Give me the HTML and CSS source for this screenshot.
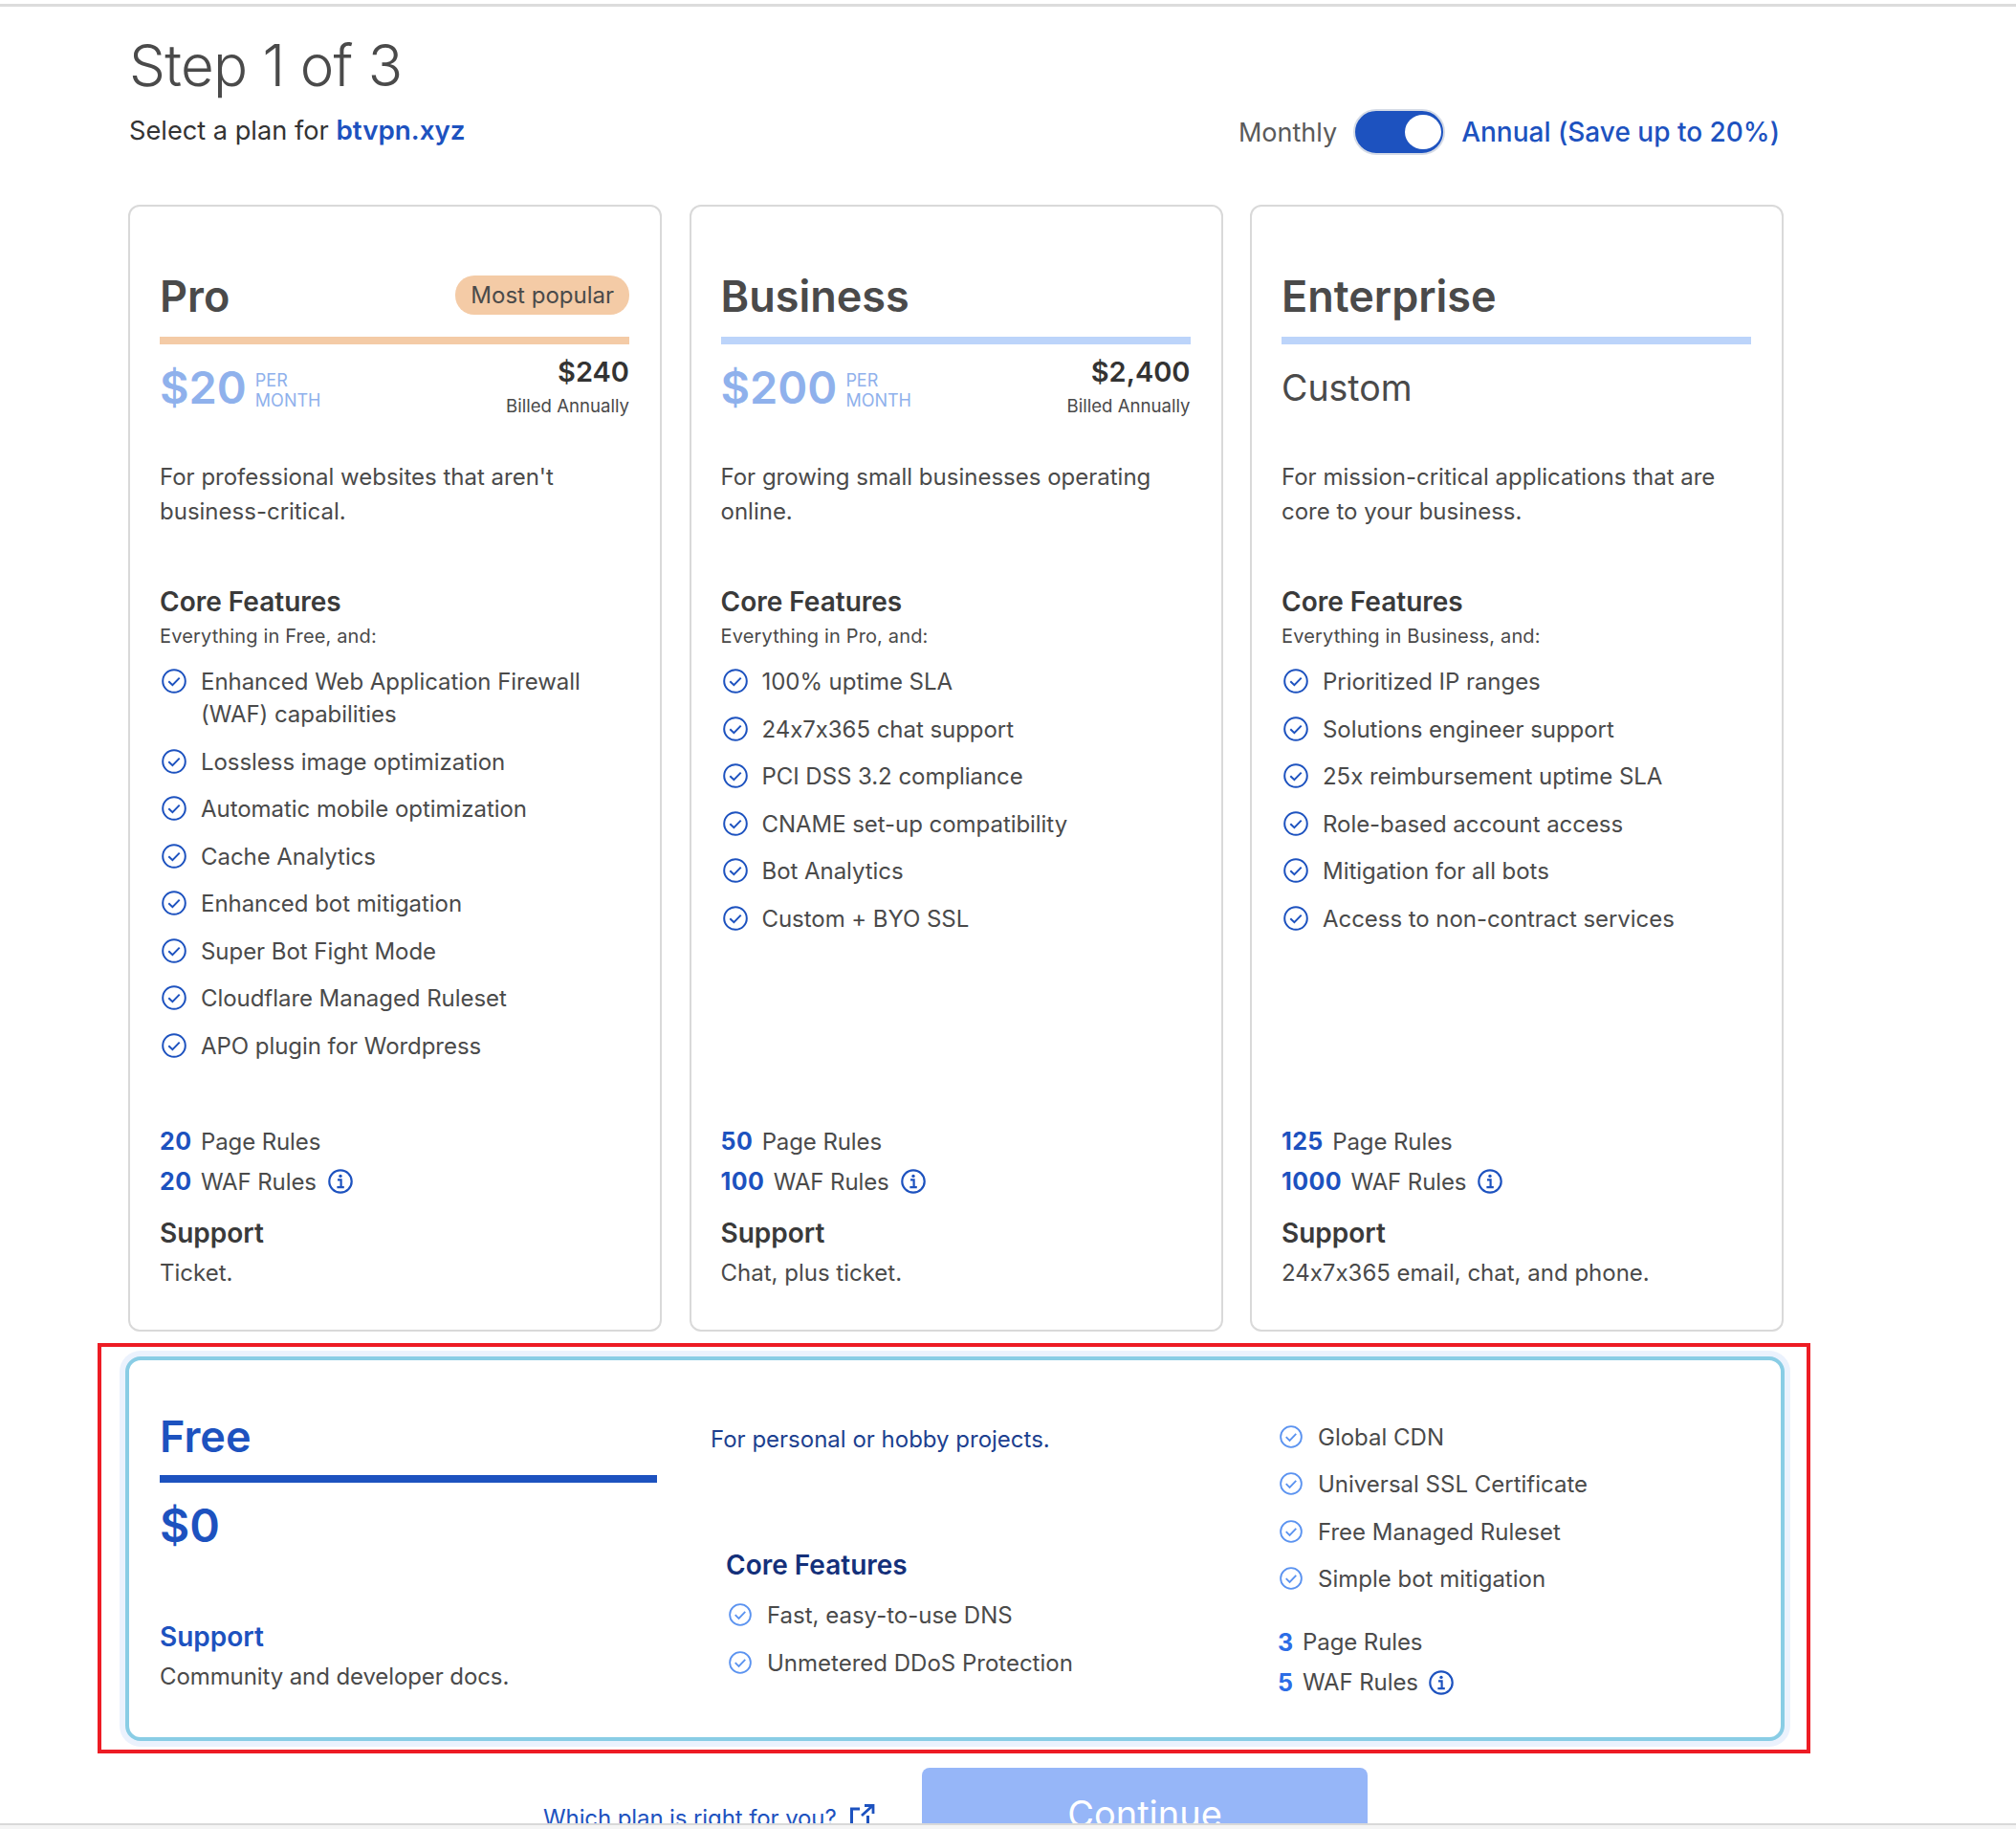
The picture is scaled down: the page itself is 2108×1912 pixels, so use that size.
FILE: index.html
```html
<!DOCTYPE html>
<html lang="en">
<head>
<meta charset="utf-8">
<title>Select a plan</title>
<link rel="stylesheet" href="styles.css">
</head>
<body>
<svg class="defs" width="0" height="0" aria-hidden="true">
  <symbol id="check" viewBox="0 0 26 26"><circle cx="13" cy="13" r="11.8" fill="none" stroke="currentColor" stroke-width="2"/><path d="M7.3 13.2l4.1 4 7.3-7.6" fill="none" stroke="currentColor" stroke-width="2"/></symbol>
  <symbol id="info" viewBox="0 0 26 26"><circle cx="13" cy="13" r="11.7" fill="none" stroke="currentColor" stroke-width="2.2"/><circle cx="13" cy="7.4" r="1.7" fill="currentColor"/><path d="M10 11.4h3.6v7.6M9.4 19.200h7.400" fill="none" stroke="currentColor" stroke-width="2.200"/></symbol>
  <symbol id="ext" viewBox="0 0 26 32"><path d="M10 5H1.500V32M18.500 12V32" fill="none" stroke="currentColor" stroke-width="3"/><path d="M12 12L23.500 1.500M15 1.500H24V10" fill="none" stroke="currentColor" stroke-width="2.800"/></symbol>
</svg>
<div class="page">
  <div class="topline"></div>
  <main class="main">
    <header class="header">
      <div>
        <h1 class="step">Step 1 of 3</h1>
        <p class="sub">Select a plan for <a class="domain">btvpn.xyz</a></p>
      </div>
      <div class="billing">
        <span class="billing-off">Monthly</span>
        <span class="switch"><span class="knob"></span></span>
        <span class="billing-on">Annual (Save up to 20%)</span>
      </div>
    </header>

    <section class="plans">
      <article class="card">
        <div class="card-head head-orange"><h2 class="plan-name">Pro</h2><span class="badge">Most popular</span></div>
        <div class="price-row">
          <div class="price"><span class="amount">$20</span><span class="per">PER<br>MONTH</span></div>
          <div class="billed"><strong>$240</strong><span>Billed Annually</span></div>
        </div>
        <p class="desc">For professional websites that aren't<br>business-critical.</p>
        <h3 class="feat-title">Core Features</h3>
        <p class="feat-sub">Everything in Free, and:</p>
        <ul class="feats">
          <li><svg class="ico"><use href="#check"/></svg><span>Enhanced Web Application Firewall<br>(WAF) capabilities</span></li>
          <li><svg class="ico"><use href="#check"/></svg><span>Lossless image optimization</span></li>
          <li><svg class="ico"><use href="#check"/></svg><span>Automatic mobile optimization</span></li>
          <li><svg class="ico"><use href="#check"/></svg><span>Cache Analytics</span></li>
          <li><svg class="ico"><use href="#check"/></svg><span>Enhanced bot mitigation</span></li>
          <li><svg class="ico"><use href="#check"/></svg><span>Super Bot Fight Mode</span></li>
          <li><svg class="ico"><use href="#check"/></svg><span>Cloudflare Managed Ruleset</span></li>
          <li><svg class="ico"><use href="#check"/></svg><span>APO plugin for Wordpress</span></li>
        </ul>
        <div class="rules">
          <div class="rule"><b>20</b><span>Page Rules</span></div>
          <div class="rule"><b>20</b><span>WAF Rules</span><svg class="ico-info"><use href="#info"/></svg></div>
        </div>
        <h3 class="support-title">Support</h3>
        <p class="support-text">Ticket.</p>
      </article>

      <article class="card">
        <div class="card-head head-blue"><h2 class="plan-name">Business</h2></div>
        <div class="price-row">
          <div class="price"><span class="amount">$200</span><span class="per">PER<br>MONTH</span></div>
          <div class="billed"><strong>$2,400</strong><span>Billed Annually</span></div>
        </div>
        <p class="desc">For growing small businesses operating<br>online.</p>
        <h3 class="feat-title">Core Features</h3>
        <p class="feat-sub">Everything in Pro, and:</p>
        <ul class="feats">
          <li><svg class="ico"><use href="#check"/></svg><span>100% uptime SLA</span></li>
          <li><svg class="ico"><use href="#check"/></svg><span>24x7x365 chat support</span></li>
          <li><svg class="ico"><use href="#check"/></svg><span>PCI DSS 3.2 compliance</span></li>
          <li><svg class="ico"><use href="#check"/></svg><span>CNAME set-up compatibility</span></li>
          <li><svg class="ico"><use href="#check"/></svg><span>Bot Analytics</span></li>
          <li><svg class="ico"><use href="#check"/></svg><span>Custom + BYO SSL</span></li>
        </ul>
        <div class="rules">
          <div class="rule"><b>50</b><span>Page Rules</span></div>
          <div class="rule"><b>100</b><span>WAF Rules</span><svg class="ico-info"><use href="#info"/></svg></div>
        </div>
        <h3 class="support-title">Support</h3>
        <p class="support-text">Chat, plus ticket.</p>
      </article>

      <article class="card">
        <div class="card-head head-blue"><h2 class="plan-name">Enterprise</h2></div>
        <div class="price-row"><div class="custom">Custom</div></div>
        <p class="desc">For mission-critical applications that are<br>core to your business.</p>
        <h3 class="feat-title">Core Features</h3>
        <p class="feat-sub">Everything in Business, and:</p>
        <ul class="feats">
          <li><svg class="ico"><use href="#check"/></svg><span>Prioritized IP ranges</span></li>
          <li><svg class="ico"><use href="#check"/></svg><span>Solutions engineer support</span></li>
          <li><svg class="ico"><use href="#check"/></svg><span>25x reimbursement uptime SLA</span></li>
          <li><svg class="ico"><use href="#check"/></svg><span>Role-based account access</span></li>
          <li><svg class="ico"><use href="#check"/></svg><span>Mitigation for all bots</span></li>
          <li><svg class="ico"><use href="#check"/></svg><span>Access to non-contract services</span></li>
        </ul>
        <div class="rules">
          <div class="rule"><b>125</b><span>Page Rules</span></div>
          <div class="rule"><b>1000</b><span>WAF Rules</span><svg class="ico-info"><use href="#info"/></svg></div>
        </div>
        <h3 class="support-title">Support</h3>
        <p class="support-text">24x7x365 email, chat, and phone.</p>
      </article>
    </section>

    <section class="highlight">
      <article class="free">
        <div class="free-a">
          <h2 class="free-name">Free</h2>
          <div class="free-price">$0</div>
          <h3 class="support-title free-support">Support</h3>
          <p class="support-text">Community and developer docs.</p>
        </div>
        <div class="free-b">
          <p class="free-desc">For personal or hobby projects.</p>
          <div class="free-core">
            <h3 class="feat-title navy">Core Features</h3>
            <ul class="feats light">
              <li><svg class="ico"><use href="#check"/></svg><span>Fast, easy-to-use DNS</span></li>
              <li><svg class="ico"><use href="#check"/></svg><span>Unmetered DDoS Protection</span></li>
            </ul>
          </div>
        </div>
        <div class="free-c">
          <ul class="feats light">
            <li><svg class="ico"><use href="#check"/></svg><span>Global CDN</span></li>
            <li><svg class="ico"><use href="#check"/></svg><span>Universal SSL Certificate</span></li>
            <li><svg class="ico"><use href="#check"/></svg><span>Free Managed Ruleset</span></li>
            <li><svg class="ico"><use href="#check"/></svg><span>Simple bot mitigation</span></li>
          </ul>
          <div class="rules free-rules">
            <div class="rule"><b>3</b><span>Page Rules</span></div>
            <div class="rule"><b>5</b><span>WAF Rules</span><svg class="ico-info"><use href="#info"/></svg></div>
          </div>
        </div>
      </article>
    </section>

    <div class="actions">
      <a class="help">Which plan is right for you?<svg class="ico-ext"><use href="#ext"/></svg></a>
      <button class="continue" type="button">Continue</button>
    </div>
  </main>
</div>
<div class="statusbar"></div>
</body>
</html>
```
FILE: styles.css
```css
* { box-sizing: border-box; }
html, body { margin: 0; padding: 0; background: #fff; }
body { font-family: Inter, "Liberation Sans", sans-serif; font-feature-settings: "calt" 0; color: #4a4a4a; overflow: hidden; height: 1912px; }
h1, h2, h3, p, ul { margin: 0; padding: 0; }
ul { list-style: none; }
.defs { position: absolute; }

.page { height: 1906px; overflow: hidden; padding-top: 4px; }
.topline { height: 3px; background: #dcdcdc; }
.main { width: 1730px; margin-left: 134px; }

.header { display: flex; justify-content: space-between; align-items: flex-start; height: 207px; padding-top: 26px; padding-right: 3px; }
.step { font-size: 60px; font-weight: 300; line-height: 70px; letter-spacing: -0.7px; color: #4a4a4a; margin-left: 1px; }
.sub { font-size: 27.200px; line-height: 36px; margin-top: 15px; color: #333; margin-left: 1px; }
.domain { color: #1d52bf; font-size: 27.800px; font-weight: 600; }
.billing { display: flex; align-items: center; margin-top: 81px; font-size: 28px; }
.billing-off { font-size: 27px; color: #5a5a5a; }
.switch { width: 96px; height: 48px; margin: 0 17px 0 17px; padding: 4px 2px 4px 0; display: flex; justify-content: flex-end; background: #1d52bf; border: 2px solid #d5dbe6; border-radius: 24px; }
.knob { width: 38px; height: 36px; background: #fff; border-radius: 50%; }
.billing-on { color: #1d52bf; font-weight: 500; }

.plans { display: grid; grid-template-columns: 558px 558px 558px; column-gap: 28.5px; height: 1178px; }
.card { display: flex; flex-direction: column; padding: 64px 32px 41px 31px; border: 2px solid #d9d9d9; border-radius: 12px; background: #fff; }
.card-head { display: flex; justify-content: space-between; align-items: center; height: 80px; padding-bottom: 12px; border-bottom: 8px solid; }
.head-orange { border-color: #f4cba6; }
.head-blue { border-color: #bcd4fa; }
.plan-name { font-size: 45px; font-weight: 600; line-height: 56px; color: #4a4a4a; }
.badge { height: 41px; margin-top: -3px; padding: 0 16px; display: flex; align-items: center; border-radius: 20px; background: #f4cba6; font-size: 24px; color: #4a4a4a; }

.price-row { display: flex; justify-content: space-between; align-items: flex-start; height: 121px; padding-top: 15px; }
.price { display: flex; align-items: center; color: #8fb1ec; height: 60px; }
.amount { font-size: 47px; font-weight: 600; line-height: 60px; }
.per { font-size: 18px; line-height: 21px; margin: 6px 0 0 9px; }
.billed { display: flex; flex-direction: column; align-items: flex-end; }
.billed strong { font-size: 29px; line-height: 28px; font-weight: 600; color: #333; }
.billed span { font-size: 18.600px; line-height: 26px; margin-top: 8px; color: #4a4a4a; }
.custom { font-size: 37.500px; line-height: 62px; color: #4a4a4a; }

.desc { font-size: 24px; line-height: 36px; height: 72px; color: #4a4a4a; }
.feat-title { font-size: 28px; font-weight: 600; line-height: 36px; margin-top: 58px; color: #3a3a3a; }
.feat-sub { font-size: 20px; letter-spacing: 0.15px; line-height: 28px; margin-top: 4px; color: #4a4a4a; }
.feats { margin-top: 17px; }
.feats li { display: flex; align-items: flex-start; margin-bottom: 15.5px; font-size: 24px; letter-spacing: -0.05px; line-height: 34px; color: #4a4a4a; }
.ico { flex: none; width: 26px; height: 26px; margin: 3px 15px 0 2px; color: #1d52bf; }

.rules { margin-top: auto; }
.rule { display: flex; align-items: center; height: 34px; margin-bottom: 8px; font-size: 24px; letter-spacing: -0.1px; color: #4a4a4a; }
.rule:last-child { margin-bottom: 0; }
.rule b { font-size: 25px; letter-spacing: 0.4px; font-weight: 700; color: #1d52bf; margin-right: 9.5px; }
.ico-info { width: 26px; height: 26px; margin-left: 12px; color: #1d52bf; }
.support-title { font-size: 28px; font-weight: 600; line-height: 36px; margin-top: 19px; color: #3a3a3a; }
.support-text { font-size: 24px; line-height: 36px; margin-top: 6px; color: #4a4a4a; }

.highlight { width: 1791px; height: 429px; margin: 12px 0 0 -32px; padding: 10px 23px 9px 25px; border: 4px solid #ed1c24; }
.free { display: grid; grid-template-columns: 576px 593px 1fr; height: 402px; padding: 52px 0 0 32px; border: 4px solid #89cde5; border-radius: 16px; box-shadow: 0 0 0 6px #ebf2fd; background: #fff; }
.free-name { font-size: 45px; font-weight: 600; line-height: 56px; width: 520px; padding-bottom: 12px; height: 76px; border-bottom: 8px solid #1d52bf; color: #1d52bf; }
.free-price { font-size: 48px; font-weight: 600; line-height: 60px; margin-top: 15px; color: #1d52bf; }
.free-support { margin-top: 68px; color: #1d52bf; }
.free-a .support-text { letter-spacing: -0.1px; }
.free-desc { font-size: 24px; line-height: 36px; margin-top: 13px; color: #1c3f8f; }
.free-core { padding-left: 16px; }
.free-core .feat-title { margin-top: 95px; }
.navy { color: #14307a; }
.free-core .feats { margin-top: 18px; }
.free-core .feats li { margin-bottom: 16px; }
.light li { letter-spacing: 0; }
.light .ico { color: #5b93f0; width: 24px; height: 24px; margin: 4px 16px 0 2px; }
.free-core .ico { margin: 4px 16px 0 3px; }
.free-c .feats { margin-top: 11.5px; }
.free-rules { margin-top: 31.5px; }
.free-rules b { color: #2c6de6; }
.free-c .ico-info { margin-left: 11px; }

.actions { display: flex; justify-content: space-between; align-items: flex-start; margin-top: 15px; padding-left: 434px; padding-right: 434px; }
.help { display: flex; align-items: flex-start; margin-top: 35px; font-size: 24px; letter-spacing: -0.1px; line-height: 36px; color: #1d52bf; }
.ico-ext { flex: none; width: 26px; height: 32px; margin: 3px 0 0 14px; color: #1d52bf; }
.continue { width: 466px; height: 96px; border: 0; border-radius: 8px; background: #96b6f8; color: #fff; font-family: Inter, "Liberation Sans", sans-serif; font-size: 38px; }

.statusbar { height: 6px; border-top: 2px solid #d9d9d9; background: #f5f5f5; }
```
